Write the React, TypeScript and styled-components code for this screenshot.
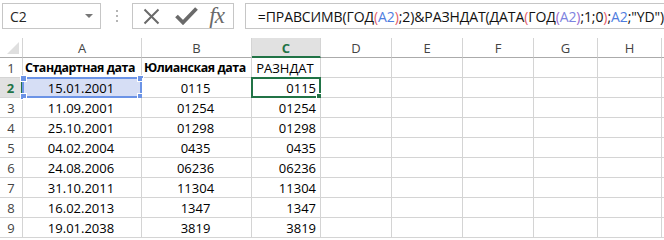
import React from "react";
import styled, { createGlobalStyle } from "styled-components";

const Global = createGlobalStyle`
  html, body {
    margin: 0;
    padding: 0;
    background: #ffffff;
    overflow: hidden;
  }
`;

const Page = styled.div`
  width: 664px;
  height: 240px;
  overflow: hidden;
  font-family: "Open Sans", "Liberation Sans", sans-serif;
  color: #000;
`;

const Toolbar = styled.div`
  height: 38px;
  box-sizing: border-box;
  padding: 3px 0 0 2px;
  display: flex;
  align-items: flex-start;
`;

const NameBox = styled.div`
  width: 104px;
  height: 26px;
  box-sizing: border-box;
  border: 1px solid #c6c6c6;
  display: flex;
  align-items: center;
  justify-content: space-between;
  padding: 0 7px 0 7px;
  font-size: 14px;
  color: #262626;
`;

const Caret = styled.span`
  width: 0;
  height: 0;
  border-left: 4px solid transparent;
  border-right: 4px solid transparent;
  border-top: 4px solid #777;
`;

const Dots = styled.div`
  width: 2px;
  margin: 7px 14px 0 15px;
  display: flex;
  flex-direction: column;
  gap: 3px;
  & > span {
    width: 2px;
    height: 2px;
    background: #b5b5b5;
  }
`;

const FuncBox = styled.div`
  width: 102px;
  height: 26px;
  box-sizing: border-box;
  border: 1px solid #c6c6c6;
  display: flex;
  align-items: center;
  padding-left: 10px;
`;

const IconSlot = styled.div<{ w: number }>`
  width: ${({ w }) => w}px;
  height: 24px;
  display: flex;
  align-items: center;
`;

const Fx = styled.span`
  font-family: "Liberation Serif", "DejaVu Serif", serif;
  font-style: italic;
  font-size: 23px;
  color: #6a6a6a;
  letter-spacing: -1px;
  line-height: 24px;
`;

const FormulaBox = styled.div`
  margin-left: 11px;
  flex: 1;
  height: 26px;
  box-sizing: border-box;
  border: 1px solid #c6c6c6;
  border-right: none;
  display: flex;
  align-items: center;
  padding-left: 12px;
  font-size: 14px;
  white-space: nowrap;
  color: #111;
  letter-spacing: -0.1px;
`;

const Ref = styled.span<{ c: string }>`
  color: ${({ c }) => c};
`;

const Sheet = styled.div`
  display: grid;
  grid-template-columns: 23px 119px 110px 69px 71px 71px 71px 64px 64px 1fr;
  grid-auto-rows: 20px;
`;

const ColHead = styled.div<{ active?: boolean }>`
  box-sizing: border-box;
  border-right: 1px solid #d4d4d4;
  border-bottom: ${({ active }) => (active ? "2px solid #217346" : "1px solid #ababab")};
  background: ${({ active }) => (active ? "#e1e1e1" : "#fff")};
  color: ${({ active }) => (active ? "#217346" : "#444")};
  font-weight: ${({ active }) => (active ? 700 : 400)};
  font-size: 13px;
  display: flex;
  align-items: center;
  justify-content: center;
  padding-top: ${({ active }) => (active ? "1px" : "0")};
`;

const Corner = styled.div`
  box-sizing: border-box;
  border-right: 1px solid #d4d4d4;
  border-bottom: 1px solid #ababab;
  display: flex;
  align-items: flex-end;
  justify-content: flex-end;
  padding: 0 3px 3px 0;
  & > span {
    width: 0;
    height: 0;
    border-left: 12px solid transparent;
    border-bottom: 12px solid #dfdfdf;
  }
`;

const RowHead = styled.div<{ active?: boolean }>`
  box-sizing: border-box;
  border-right: ${({ active }) => (active ? "2px solid #217346" : "1px solid #d4d4d4")};
  border-bottom: 1px solid #d4d4d4;
  background: ${({ active }) => (active ? "#e1e1e1" : "#fff")};
  color: ${({ active }) => (active ? "#217346" : "#444")};
  font-weight: ${({ active }) => (active ? 700 : 400)};
  font-size: 13px;
  display: flex;
  align-items: center;
  justify-content: center;
`;

const Cell = styled.div<{ align?: "left" | "center" | "right"; bold?: boolean; hl?: boolean }>`
  position: relative;
  box-sizing: border-box;
  border-right: 1px solid #d4d4d4;
  border-bottom: 1px solid #d4d4d4;
  background: ${({ hl }) => (hl ? "#d6def5" : "#fff")};
  font-size: ${({ bold }) => (bold ? "12.4px" : "13px")};
  font-weight: ${({ bold }) => (bold ? 700 : 400)};
  letter-spacing: ${({ bold }) => (bold ? "-0.45px" : "0")};
  display: flex;
  align-items: center;
  white-space: nowrap;
  overflow: visible;
  padding: 0 4px 0 2px;
  justify-content: ${({ align }) =>
    align === "right" ? "flex-end" : align === "center" ? "center" : "flex-start"};
`;

const RefFrame = styled.div`
  position: absolute;
  left: -1px;
  top: -1px;
  right: -1px;
  bottom: -1px;
  border: 2px solid #6b93e6;
  pointer-events: none;
`;

const Handle = styled.span<{ x: "l" | "r"; y: "t" | "b"; color: string }>`
  position: absolute;
  width: 5px;
  height: 5px;
  background: ${({ color }) => color};
  border: 1px solid #fff;
  ${({ x }) => (x === "l" ? "left: -4px;" : "right: -4px;")}
  ${({ y }) => (y === "t" ? "top: -4px;" : "bottom: -4px;")}
`;

const ActiveFrame = styled.div`
  position: absolute;
  left: -1px;
  top: -1px;
  right: -1px;
  bottom: -1px;
  border: 2px solid #217346;
  pointer-events: none;
`;

const columns = ["A", "B", "C", "D", "E", "F", "G", "H"];

const rows: [string, string, string][] = [
  ["15.01.2001", "0115", "0115"],
  ["11.09.2001", "01254", "01254"],
  ["25.10.2001", "01298", "01298"],
  ["04.02.2004", "0435", "0435"],
  ["24.08.2006", "06236", "06236"],
  ["31.10.2011", "11304", "11304"],
  ["16.02.2013", "1347", "1347"],
  ["19.01.2038", "3819", "3819"],
];

const Empty = () => (
  <>
    {[0, 1, 2, 3, 4, 5].map((i) => (
      <Cell key={i} />
    ))}
  </>
);

export default function App() {
  return (
    <Page>
      <Global />
      <Toolbar>
        <NameBox>
          C2
          <Caret />
        </NameBox>
        <Dots>
          <span />
          <span />
          <span />
        </Dots>
        <FuncBox>
          <IconSlot w={33}>
            <svg width="17" height="17" viewBox="0 0 17 17">
              <path d="M1.5 1.5 L15.5 15.5 M15.5 1.5 L1.5 15.5" stroke="#6a6a6a" strokeWidth="2" fill="none" />
            </svg>
          </IconSlot>
          <IconSlot w={35}>
            <svg width="23" height="18" viewBox="0 0 23 18">
              <path d="M1.5 9 L8 15.5 L21.5 1.5" stroke="#6a6a6a" strokeWidth="3.8" fill="none" strokeLinejoin="miter" />
            </svg>
          </IconSlot>
          <IconSlot w={24}>
            <Fx>fx</Fx>
          </IconSlot>
        </FuncBox>
        <FormulaBox>
          =ПРАВСИМВ(ГОД<Ref c="#e35d6a">(</Ref>
          <Ref c="#4f7ddf">A2</Ref>
          <Ref c="#e35d6a">)</Ref>;2)&amp;РАЗНДАТ(ДАТА<Ref c="#e35d6a">(</Ref>ГОД
          <Ref c="#9a6ad0">(</Ref>
          <Ref c="#7c83e0">A2</Ref>
          <Ref c="#9a6ad0">)</Ref>;1;0<Ref c="#e35d6a">)</Ref>;<Ref c="#4f7ddf">A2</Ref>;"YD")
        </FormulaBox>
      </Toolbar>

      <Sheet>
        <Corner>
          <span />
        </Corner>
        {columns.map((c) => (
          <ColHead key={c} active={c === "C"}>
            {c}
          </ColHead>
        ))}
        <ColHead />

        <RowHead>1</RowHead>
        <Cell bold align="left">Стандартная дата</Cell>
        <Cell bold align="left">Юлианская дата</Cell>
        <Cell align="center">РАЗНДАТ</Cell>
        <Empty />

        {rows.map(([a, b, c], i) => {
          const n = i + 2;
          const first = n === 2;
          return (
            <React.Fragment key={n}>
              <RowHead active={first}>{n}</RowHead>
              <Cell align="center" hl={first}>
                {a}
                {first && (
                  <RefFrame>
                    <Handle x="l" y="t" color="#6b93e6" />
                    <Handle x="r" y="t" color="#6b93e6" />
                    <Handle x="l" y="b" color="#6b93e6" />
                    <Handle x="r" y="b" color="#6b93e6" />
                  </RefFrame>
                )}
              </Cell>
              <Cell align="center">{b}</Cell>
              <Cell align="right">
                {c}
                {first && (
                  <ActiveFrame>
                    <Handle x="r" y="b" color="#217346" />
                  </ActiveFrame>
                )}
              </Cell>
              <Empty />
            </React.Fragment>
          );
        })}
      </Sheet>
    </Page>
  );
}
